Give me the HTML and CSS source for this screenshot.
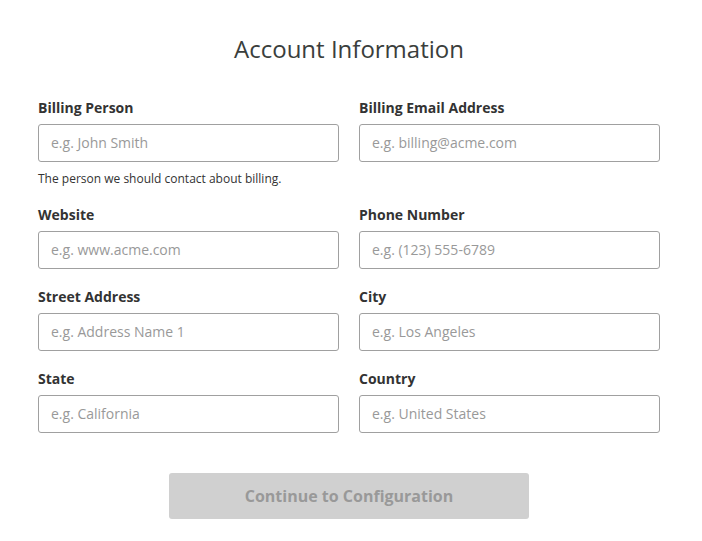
FILE: index.html
```html
<!DOCTYPE html>
<html lang="en">
<head>
    <meta charset="UTF-8">
    <meta name="viewport" content="width=device-width, initial-scale=1.0">
    <title>Account Information</title>
    <link rel="stylesheet" href="styles.css">
</head>
<body>
    <div class="account-page">
        <h1 class="page-title">Account Information</h1>

        <form id="account-form" class="account-form">
            <div class="field">
                <label for="billing_person">Billing Person</label>
                <input type="text" id="billing_person" placeholder="e.g. John Smith">
                <p class="hint">The person we should contact about billing.</p>
            </div>
            <div class="field">
                <label for="billing_email">Billing Email Address</label>
                <input type="email" id="billing_email" placeholder="e.g. billing@acme.com">
            </div>

            <div class="field">
                <label for="website">Website</label>
                <input type="text" id="website" placeholder="e.g. www.acme.com">
            </div>
            <div class="field">
                <label for="phone">Phone Number</label>
                <input type="text" id="phone" placeholder="e.g. (123) 555-6789">
            </div>

            <div class="field">
                <label for="street">Street Address</label>
                <input type="text" id="street" placeholder="e.g. Address Name 1">
            </div>
            <div class="field">
                <label for="city">City</label>
                <input type="text" id="city" placeholder="e.g. Los Angeles">
            </div>

            <div class="field">
                <label for="state">State</label>
                <input type="text" id="state" placeholder="e.g. California">
            </div>
            <div class="field">
                <label for="country">Country</label>
                <input type="text" id="country" placeholder="e.g. United States">
            </div>
        </form>

        <div class="actions">
            <button type="submit" form="account-form" class="continue-btn" disabled>Continue to Configuration</button>
        </div>
    </div>
</body>
</html>
```

FILE: styles.css
```css
body {
    margin: 0;
    font-family: 'Open Sans', 'Liberation Sans', sans-serif;
    background-color: #fff;
    color: #333;
}
.account-page {
    width: 622px;
    margin: 0 0 0 38px;
}
.page-title {
    margin: 33px 0 0;
    font-size: 24px;
    line-height: 32px;
    font-weight: 400;
    text-align: center;
    color: #3a3e3c;
}
.account-form {
    display: grid;
    grid-template-columns: 1fr 1fr;
    column-gap: 20px;
    row-gap: 18px;
    margin-top: 33px;
}
.field {
    display: flex;
    flex-direction: column;
}
.field label {
    font-size: 14px;
    line-height: 20px;
    font-weight: 700;
    color: #333;
    margin-bottom: 6px;
}
.field input {
    box-sizing: border-box;
    height: 38px;
    width: 100%;
    padding: 0 12px 2px;
    border: 1px solid #a0a0a0;
    border-radius: 3px;
    font-family: inherit;
    font-size: 14px;
    color: #333;
}
.field input::placeholder {
    color: #999;
}
.hint {
    margin: 8px 0 0;
    font-size: 12px;
    line-height: 17px;
    color: #333;
}
.actions {
    display: flex;
    justify-content: center;
    margin-top: 40px;
}
.continue-btn {
    width: 360px;
    height: 46px;
    border: none;
    border-radius: 3px;
    background-color: #d0d0d0;
    color: #999;
    font-family: inherit;
    font-size: 16px;
    font-weight: 700;
}
```
